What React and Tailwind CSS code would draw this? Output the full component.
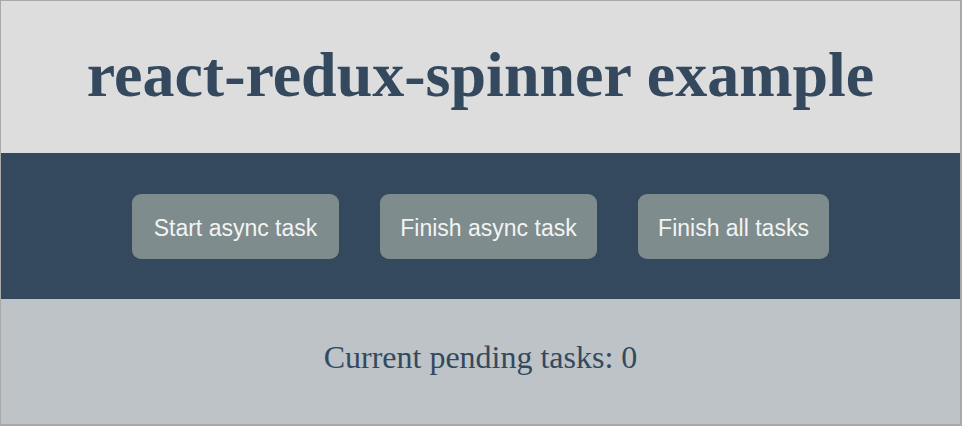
export default function App() {
  const btn = "h-[65px] pt-1 rounded-[9px] bg-[#7f8c8d] text-[#f2f4f4] text-[23px] font-['Liberation_Sans',Arial,sans-serif]";
  return (
    <div className="w-[962px] h-[426px] border-t border-l border-r-2 border-b-2 border-[#a9a9a9] flex flex-col overflow-hidden">
      <div className="h-[152px] bg-[#dddddd] flex items-center justify-center">
        <h1 className="text-[64px] font-bold text-[#34495e] leading-none pb-1 font-['Liberation_Serif','Times_New_Roman',serif]">
          react-redux-spinner example
        </h1>
      </div>
      <div className="h-[146px] bg-[#34495e] flex items-center justify-center gap-[41px]">
        <button className={`w-[207px] ${btn}`}>Start async task</button>
        <button className={`w-[217px] ${btn}`}>Finish async task</button>
        <button className={`w-[191px] ${btn}`}>Finish all tasks</button>
      </div>
      <div className="flex-1 bg-[#bdc3c7] flex items-center justify-center">
        <p className="text-[32px] text-[#34495e] leading-none pb-[10px] font-['Liberation_Serif','Times_New_Roman',serif]">Current pending tasks: 0</p>
      </div>
    </div>
  );
}
